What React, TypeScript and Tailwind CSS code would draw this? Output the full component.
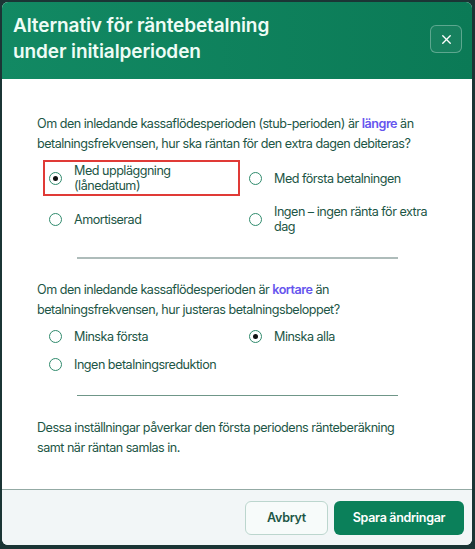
import { X } from 'lucide-react'

type Opt = { id: string; label: string; checked?: boolean; outlined?: boolean }

const STUB_LONG: Opt[] = [
  { id: 'orig', label: 'Med uppläggning (lånedatum)', checked: true, outlined: true },
  { id: 'first', label: 'Med första betalningen' },
  { id: 'amort', label: 'Amortiserad' },
  { id: 'none', label: 'Ingen – ingen ränta för extra dag' },
]

const STUB_SHORT: Opt[] = [
  { id: 'first', label: 'Minska första' },
  { id: 'all', label: 'Minska alla', checked: true },
  { id: 'none', label: 'Ingen betalningsreduktion' },
]

function Radio({ opt }: { opt: Opt }) {
  return (
    <label
      className={`flex items-center gap-3 w-[197px] pl-[4px] pr-0 py-[1px] border-2 cursor-pointer ${
        opt.outlined ? 'border-[#e03a36]' : 'border-transparent'
      }`}
    >
      <span className="w-[13px] h-[13px] rounded-full border-[1.5px] border-[#2f8a6c] bg-white flex items-center justify-center flex-shrink-0">
        {opt.checked && <span className="w-[5px] h-[5px] rounded-full bg-[#111]" />}
      </span>
      <span className="text-[12.6px] leading-[15px] tracking-[-0.5px] text-[#1d5646]">{opt.label}</span>
    </label>
  )
}

export default function App() {
  return (
    <div
      className="w-[475px] h-[549px] bg-[#1b3535] pt-[2px] pl-[2px]"
      style={{ fontFamily: 'Inter, "Noto Sans", sans-serif' }}
    >
      <div className="w-[470px] h-[543px] bg-white rounded-[6px] overflow-hidden flex flex-col">
        {/* Header */}
        <div className="h-[77px] bg-gradient-to-r from-[#128963] to-[#0b7a56] flex items-start justify-between pl-[11px] pr-[10px] pt-[11px]">
          <h2 className="text-[19px] leading-[26px] font-semibold tracking-[-0.1px] text-[#eefcf6]">
            Alternativ för räntebetalning
            <br />
            under initialperioden
          </h2>
          <button className="mt-[12px] w-[32px] h-[28px] rounded-[6px] border border-white/30 bg-white/5 flex items-center justify-center text-white">
            <X size={15} strokeWidth={2.2} />
          </button>
        </div>

        {/* Body */}
        <div className="flex-1 px-[35px] pt-[35px] text-[12.6px] leading-[20px] tracking-[-0.5px] text-[#1d5646]">
          <p>
            Om den inledande kassaflödesperioden (stub-perioden) är{' '}
            <span className="font-semibold text-[#6655ee]">längre</span> än
            <br />
            betalningsfrekvensen, hur ska räntan för den extra dagen debiteras?
          </p>
          <div className="mt-[6px] ml-[6px] grid grid-cols-[200px_200px] gap-y-[5px]">
            {STUB_LONG.map(o => (
              <Radio key={o.id} opt={o} />
            ))}
          </div>

          <div className="mx-auto mt-[20px] w-[321px] h-[1.5px] bg-[#aebcba]" />

          <p className="mt-[21px]">
            Om den inledande kassaflödesperioden är{' '}
            <span className="font-semibold text-[#6655ee]">kortare</span> än
            <br />
            betalningsfrekvensen, hur justeras betalningsbeloppet?
          </p>
          <div className="mt-[6px] ml-[6px] grid grid-cols-[200px_200px] gap-y-[7px]">
            {STUB_SHORT.map(o => (
              <Radio key={o.id} opt={o} />
            ))}
          </div>

          <div className="mx-auto mt-[20px] w-[321px] h-px bg-[#6f9688]" />

          <p className="mt-[22px]">
            Dessa inställningar påverkar den första periodens ränteberäkning
            <br />
            samt när räntan samlas in.
          </p>
        </div>

        {/* Footer */}
        <div className="h-[56px] border-t border-[#93aaa4] bg-[#f2f6f7] flex items-start justify-end gap-[6px] pt-[11px] pr-[8px]">
          <button className="w-[83px] h-[34px] rounded-[6px] border border-[#bcd6ce] bg-[#f7fbfa] text-[12.5px] font-semibold tracking-[-0.3px] text-[#1d5646]">
            Avbryt
          </button>
          <button className="w-[130px] h-[34px] rounded-[6px] bg-[#0b805a] text-[12.5px] font-semibold tracking-[-0.3px] text-white">
            Spara ändringar
          </button>
        </div>
      </div>
    </div>
  )
}
